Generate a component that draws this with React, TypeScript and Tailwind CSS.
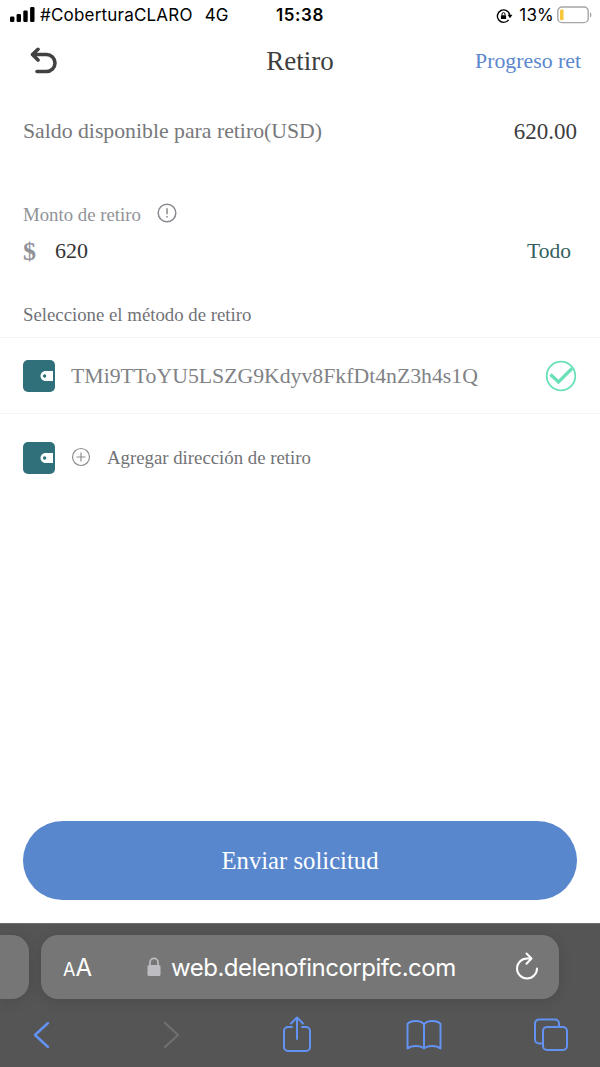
import type { ReactNode } from "react";

function StatusBar() {
  return (
    <div className="relative flex h-8 items-center justify-between pl-[10px] pr-[7px] font-['Inter',sans-serif] text-[17px] text-black">
      <div className="flex items-center">
        <svg width="25" height="15" viewBox="0 0 25 15" fill="#000" className="-mt-[3px] mr-[5px]">
          <rect x="0" y="9.5" width="4.4" height="5.5" rx="1.2" />
          <rect x="6.6" y="7" width="4.4" height="8" rx="1.2" />
          <rect x="13.3" y="3.5" width="4.4" height="11.5" rx="1.2" />
          <rect x="20.1" y="0" width="4.4" height="15" rx="1.2" />
        </svg>
        <span className="tracking-[0.2px]">#CoberturaCLARO</span>
        <span className="ml-[12px] tracking-[0.2px]">4G</span>
      </div>
      <span className="absolute left-1/2 -translate-x-1/2 font-semibold tracking-[0.6px]">15:38</span>
      <div className="flex items-center">
        <svg width="17" height="16" viewBox="0 0 17 16" fill="none" className="-mt-px">
          <path d="M12.6 11.8A6.2 6.2 0 1 1 13.7 7" stroke="#000" strokeWidth="1.4" />
          <path d="M11.6 6.8h4.8l-2.4 3.4z" fill="#000" />
          <rect x="4.9" y="7.2" width="5.2" height="3.9" rx="0.6" fill="#000" />
          <path d="M6 7.4V6.1a1.5 1.5 0 0 1 3 0v1.3" stroke="#000" strokeWidth="1" />
        </svg>
        <span className="ml-[6px] tracking-[0.2px]">13%</span>
        <svg width="36" height="18" viewBox="0 0 36 18" fill="none" className="-mt-[2px] ml-[3px]">
          <rect x="0.8" y="1" width="30.4" height="15.6" rx="4.2" stroke="#a5a5a5" strokeWidth="1.4" />
          <rect x="3" y="3.4" width="3.6" height="10.8" rx="1.2" fill="#f7c740" />
          <path d="M33 6.2c1.8.8 1.8 4.4 0 5.2z" fill="#a0a0a0" />
        </svg>
      </div>
    </div>
  );
}

function WalletIcon() {
  return (
    <svg width="32" height="32" viewBox="0 0 32 32" className="shrink-0">
      <rect width="32" height="32" rx="5" fill="#30707a" />
      <path d="M30 11h-7.7c-2.6 0-4.8 2.6-4.8 5s2.200 5 4.800 5H30z" fill="#fff" />
      <circle cx="21.6" cy="16" r="1.7" fill="#30707a" />
    </svg>
  );
}

function ToolIcon({ children, color = "#6292f2" }: { children: ReactNode; color?: string }) {
  return (
    <svg
      width="36"
      height="40"
      viewBox="0 0 36 40"
      fill="none"
      stroke={color}
      strokeWidth="2"
      strokeLinecap="round"
      strokeLinejoin="round"
    >
      {children}
    </svg>
  );
}

function BrowserBar() {
  return (
    <footer className="flex h-[144px] shrink-0 flex-col overflow-hidden border-t border-[#6c6c6c] bg-[#555] pt-[11px] font-['Inter',sans-serif]">
      <div className="flex h-16 shrink-0 gap-3">
        <div className="w-[29px] shrink-0 rounded-r-[17px] bg-[#767676] shadow-[0_2px_14px_rgba(0,0,0,0.13)]" />
        <div className="flex w-[518px] items-center rounded-[17px] bg-[#767676] pl-[22px] pr-[20px] text-white shadow-[0_2px_14px_rgba(0,0,0,0.13)]">
          <div className="mt-px flex w-[84px] items-baseline leading-none">
            <span className="text-[18px]">A</span>
            <span className="text-[24px]">A</span>
          </div>
          <svg width="14" height="20" viewBox="0 0 14 20" fill="none">
            <rect x="0.5" y="8" width="13" height="11" rx="1.6" fill="#bdbcc2" />
            <path d="M3 9V5.4a4 4 0 0 1 8 0V9" stroke="#bdbcc2" strokeWidth="1.7" />
          </svg>
          <span className="ml-[10px] mt-[2px] whitespace-nowrap text-[24px] tracking-[-0.5px]">
            web.delenofincorpifc.com
          </span>
          <svg
            width="24"
            height="30"
            viewBox="0 0 24 30"
            fill="none"
            stroke="#fff"
            strokeWidth="2"
            strokeLinecap="round"
            strokeLinejoin="round"
            className="-mt-px ml-auto"
          >
            <path d="M22 16.5a10 10 0 1 1-10-10h4" />
            <path d="M11.5 1.5l5 5-5 5.2" />
          </svg>
        </div>
      </div>
      <div className="flex h-[68px] shrink-0 items-center justify-between pl-6 pr-[31px] pt-1">
        <ToolIcon>
          <path d="M24 8L11 20l13 12" strokeWidth="2.4" />
        </ToolIcon>
        <ToolIcon color="#707070">
          <path d="M14 8l13 12-13 12" strokeWidth="2.2" />
        </ToolIcon>
        <ToolIcon>
          <path d="M13 12H9a4 4 0 0 0-4 4v16a4 4 0 0 0 4 4h18a4 4 0 0 0 4-4V16a4 4 0 0 0-4-4h-4" />
          <path d="M18 24V3M12 8.5L18 2.500l6 6" />
        </ToolIcon>
        <ToolIcon>
          <path d="M18 9.5C15 5 5 5 1.5 9v24.500c4-3.500 13-3.500 16.500 0c3.500-3.500 12.500-3.500 16.500 0V9C31 5 21 5 18 9.500v24" />
        </ToolIcon>
        <ToolIcon>
          <path d="M9.5 28.5H6a4 4 0 0 1-4-4V8.500a4 4 0 0 1 4-4h16a4 4 0 0 1 4 4V12" />
          <rect x="10" y="12" width="24" height="23" rx="4" />
        </ToolIcon>
      </div>
    </footer>
  );
}

export default function App() {
  return (
    <div className="flex h-[1067px] w-[600px] flex-col overflow-hidden bg-white font-['Liberation_Serif',serif]">
      <StatusBar />

      {/* Header */}
      <header className="grid h-[59px] grid-cols-[1fr_auto_1fr] items-center px-[19px]">
        <svg
          width="28"
          height="28"
          viewBox="0 0 28 28"
          fill="none"
          stroke="#414141"
          strokeWidth="3.6"
          strokeLinecap="round"
          strokeLinejoin="round"
          className="-mt-px ml-[11px]"
        >
          <path d="M8 2.3L2.500 7.500L8 13" />
          <path d="M3 7.5H16.500a8.500 8.500 0 0 1 0 17H7" />
        </svg>
        <h1 className="-mt-px text-[27px] text-[#3d3d3d]">Retiro</h1>
        <span className="justify-self-end text-[21.8px] text-[#5a87cd]">Progreso ret</span>
      </header>

      <main className="flex flex-1 flex-col">
        <div className="flex h-20 items-center justify-between px-[23px]">
          <span className="text-[21.75px] text-[#77787b]">Saldo disponible para retiro(USD)</span>
          <span className="mt-[2px] text-[23px] text-[#3d3d3d]">620.00</span>
        </div>

        {/* Amount */}
        <div className="mt-[27px] flex h-8 items-center px-[23px]">
          <span className="mt-[2px] text-[18.8px] text-[#909298]">Monto de retiro</span>
          <svg width="20" height="20" viewBox="0 0 20 20" fill="none" stroke="#87898e" className="-mt-[3px] ml-4">
            <circle cx="10" cy="10" r="8.8" strokeWidth="1.5" />
            <path d="M10 5.3v6M10 13v1.600" strokeWidth="1.5" />
          </svg>
        </div>
        <div className="flex h-[42px] items-center pl-[23px] pr-[29px]">
          <span className="w-8 text-[26px] font-bold text-[#909298]">$</span>
          <span className="-mt-px text-[22px] text-[#333]">620</span>
          <span className="ml-auto text-[21.5px] text-[#33605f]">Todo</span>
        </div>

        {/* Withdrawal methods */}
        <div className="mb-[3px] mt-[22px] flex h-10 items-center px-[23px] pt-[2px] text-[18.8px] text-[#717276]">
          Seleccione el método de retiro
        </div>
        <div className="flex h-[77px] items-center border-y border-[#f4f4f4] px-[23px]">
          <WalletIcon />
          <span className="ml-4 mt-[2px] text-[21.75px] text-[#808286]">TMi9TToYU5LSZG9Kdyv8FkfDt4nZ3h4s1Q</span>
          <svg width="32" height="32" viewBox="0 0 32 32" fill="none" stroke="#69e0b8" className="ml-auto">
            <circle cx="16" cy="16" r="14.3" strokeWidth="1.8" />
            <path d="M5.5 14.500l8 7.500L27 8.500" strokeWidth="3.3" />
          </svg>
        </div>
        <div className="flex h-[87px] items-center px-[23px]">
          <WalletIcon />
          <svg width="20" height="20" viewBox="0 0 20 20" fill="none" stroke="#8b8d91" strokeWidth="1.2" className="-mt-px ml-4">
            <circle cx="10" cy="10" r="8.5" />
            <path d="M5.5 10h9M10 5.500v9" />
          </svg>
          <span className="ml-4 mt-px text-[18.8px] text-[#717276]">Agregar dirección de retiro</span>
        </div>

        <button className="mx-[23px] mb-[23px] mt-auto h-[79px] rounded-full bg-[#5987cd] text-[24.7px] text-white">
          Enviar solicitud
        </button>
      </main>

      <BrowserBar />
    </div>
  );
}
